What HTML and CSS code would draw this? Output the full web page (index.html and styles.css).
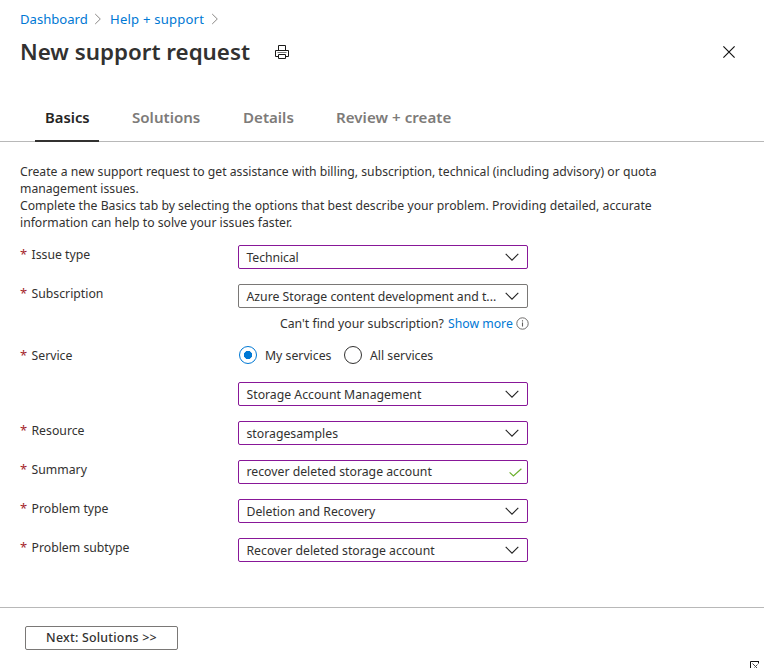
FILE: index.html
```html
<!DOCTYPE html>
<html lang="en">
<head>
<meta charset="utf-8">
<title>New support request</title>
<link rel="stylesheet" href="styles.css">
</head>
<body>
<svg class="sprites" aria-hidden="true">
  <symbol id="chevron-right" viewBox="0 0 8 12"><path d="M1.2 1 6.3 6 1.2 11" fill="none" stroke="#8a8886"/></symbol>
  <symbol id="chevron-down" viewBox="0 0 14 8"><path d="M.7.9 7 7.2 13.3.9" fill="none" stroke="#222" stroke-width="1.1"/></symbol>
</svg>
<div class="blade">
  <nav class="breadcrumb">
    <a class="crumb-dashboard">Dashboard</a>
    <svg class="crumb-arrow"><use href="#chevron-right"/></svg>
    <a class="crumb-help">Help + support</a>
    <svg class="crumb-arrow"><use href="#chevron-right"/></svg>
  </nav>
  <header class="titlebar">
    <h1>New support request</h1>
    <svg class="print" viewBox="0 0 14 14" fill="none" stroke="#1b1a19">
      <path d="M3.5 5.5v-5h7v5M3.5 11.5h-3v-6h13v6h-3" />
      <path d="M3.5 9.5h7v4h-7z"/><path d="M2.5 7.5h9" stroke="#777"/>
    </svg>
    <svg class="close" viewBox="0 0 12 12"><path d="M.4.4 11.6 11.6M11.6.4.4 11.6" stroke="#111" stroke-width="1.15"/></svg>
  </header>
  <div class="tabs">
    <div class="tab tab-basics active">Basics</div>
    <div class="tab tab-solutions">Solutions</div>
    <div class="tab tab-details">Details</div>
    <div class="tab tab-review">Review + create</div>
  </div>
  <main class="content">
    <p class="intro">Create a new support request to get assistance with billing, subscription, technical (including advisory) or quota<br>management issues.<br><span class="intro-wide">Complete the Basics tab by selecting the options that best describe your problem. Providing detailed, accurate</span><br>information can help to solve your issues faster.</p>
    <div class="form">
      <div class="row">
        <div class="label"><span class="star">*</span>Issue type</div>
        <div class="field"><span class="value technical">Technical</span><svg class="arrow"><use href="#chevron-down"/></svg></div>
      </div>
      <div class="row">
        <div class="label"><span class="star">*</span>Subscription</div>
        <div class="stack">
          <div class="field plain"><span class="value">Azure Storage content development and t...</span><svg class="arrow"><use href="#chevron-down"/></svg></div>
          <div class="hint"><span>Can't find your subscription?</span><a>Show more</a>
            <svg class="info" viewBox="0 0 13 13"><circle cx="6.5" cy="6.5" r="5.7" fill="none" stroke="#605e5c" stroke-width=".9"/><path d="M6.5 5.6v4M6.5 3.2v1.3" stroke="#605e5c" stroke-width="1.1"/></svg>
          </div>
        </div>
      </div>
      <div class="row service">
        <div class="label"><span class="star">*</span>Service</div>
        <div class="stack">
          <div class="radios">
            <span class="radio on"></span><span class="radio-text mine">My services</span>
            <span class="radio"></span><span class="radio-text">All services</span>
          </div>
          <div class="field"><span class="value">Storage Account Management</span><svg class="arrow"><use href="#chevron-down"/></svg></div>
        </div>
      </div>
      <div class="row">
        <div class="label"><span class="star">*</span>Resource</div>
        <div class="field"><span class="value">storagesamples</span><svg class="arrow"><use href="#chevron-down"/></svg></div>
      </div>
      <div class="row">
        <div class="label"><span class="star">*</span>Summary</div>
        <div class="field input"><span class="value">recover deleted storage account</span><svg class="check" viewBox="0 0 13 9"><path d="M.6 4.4 4.4 8 12.4.8" fill="none" stroke="#6bb02c" stroke-width="1.2"/></svg></div>
      </div>
      <div class="row">
        <div class="label"><span class="star">*</span>Problem type</div>
        <div class="field"><span class="value">Deletion and Recovery</span><svg class="arrow"><use href="#chevron-down"/></svg></div>
      </div>
      <div class="row">
        <div class="label"><span class="star">*</span>Problem subtype</div>
        <div class="field"><span class="value">Recover deleted storage account</span><svg class="arrow"><use href="#chevron-down"/></svg></div>
      </div>
    </div>
  </main>
  <footer class="footer">
    <button class="next">Next: Solutions &gt;&gt;</button>
    <svg class="grip" viewBox="0 0 9 8" fill="none"><path d="M8 .5H.5V7" stroke="#111"/><path d="M8.5 0v2.5M0 7.5h2.5" stroke="#111"/><path d="M2.5 2.5 7 7M7.5 3.5 4.5 6.5" stroke="#444"/></svg>
  </footer>
</div>
</body>
</html>
```
FILE: styles.css
```css
* { box-sizing: border-box; }
body {
  margin: 0;
  background: #fff;
  color: #323130;
  font: 12.25px/17px "Noto Sans", "Open Sans", sans-serif;
}
svg { display: block; flex: none; }
a { color: #0078d4; }
.sprites { position: absolute; width: 0; height: 0; }
.blade { display: flex; flex-direction: column; height: 668px; overflow: hidden; }

.breadcrumb {
  display: flex;
  align-items: center;
  height: 20px;
  margin-top: 9px;
  padding-left: 20px;
  font-size: 13.1px;
  white-space: nowrap;
}
.crumb-dashboard { width: 67px; }
.crumb-help { width: 94px; margin-left: 1px; letter-spacing: .2px; }
.crumb-arrow { width: 8px; height: 12px; margin: 0 7px; }

.titlebar { display: flex; align-items: center; height: 34px; margin-top: 6px; padding: 0 29px 0 20px; }
h1 { width: 255px; margin: 0; font-size: 22.35px; line-height: 34px; font-weight: 600; white-space: nowrap; }
.print { width: 14px; height: 14px; }
.close { width: 12px; height: 12px; margin-left: auto; }

.tabs {
  display: flex;
  gap: 23px;
  height: 43px;
  margin-top: 30px;
  padding-left: 35px;
  border-bottom: 1px solid #b8b8b8;
  color: #7d7b79;
  font-size: 15.1px;
  font-weight: 600;
  line-height: 36px;
  white-space: nowrap;
}
.tab { height: 43px; padding: 0 10px; }
.tab-basics { width: 64px; font-size: 14.8px; }
.tab-solutions { width: 88px; }
.tab-details { width: 70px; }
.tab-review { letter-spacing: .04px; }
.active { color: #252423; border-bottom: 2px solid #323130; }

.intro { margin: 21px 0 0 20px; font-size: 12.2px; white-space: nowrap; }
.intro-wide { letter-spacing: .02px; }
.form { display: flex; flex-direction: column; gap: 15px; margin: 14px 0 0 20px; }
.row { display: flex; align-items: flex-start; }
.label { display: flex; width: 218px; padding-top: 1px; }
.star { width: 11.5px; color: #a4262c; font-size: 13px; }
.stack { width: 290px; }
.field {
  display: flex;
  align-items: center;
  justify-content: space-between;
  width: 290px;
  height: 24px;
  padding: 0 8px 0 7.5px;
  border: 1px solid #881798;
  border-radius: 2px;
  white-space: nowrap;
}
.plain { border-color: #7a7876; }
.arrow { width: 14px; height: 8px; }
.input { padding-right: 5px; }
.input .value { margin-top: -1px; }
.technical { letter-spacing: -.1px; }
.check { width: 13px; height: 9px; }
.hint { display: flex; align-items: center; height: 17px; margin: 7px -1px 0 42px; white-space: nowrap; }
.hint a { margin-left: 4px; }
.info { width: 13px; height: 13px; margin-left: auto; }

.service { margin-top: -1px; }
.radios { display: flex; align-items: center; height: 18px; margin-bottom: 18px; padding-left: 1px; }
.radio { width: 18px; height: 18px; border: 1px solid #323130; border-radius: 50%; }
.on { border-color: #0078d4; background: radial-gradient(circle, #0078d4 3.8px, transparent 4.4px); }
.radio-text { margin-left: 8px; white-space: nowrap; }
.mine { width: 79px; }

.footer {
  display: flex;
  align-items: flex-start;
  height: 61px;
  margin-top: auto;
  padding: 18px 5px 0 25px;
  border-top: 1px solid #b8b8b8;
}
.next {
  width: 153px;
  height: 24px;
  padding: 0;
  border: 1px solid #7a7876;
  border-radius: 2px;
  background: #fff;
  color: #323130;
  font: 500 12.4px/20px "Noto Sans", "Open Sans", sans-serif;
  letter-spacing: .22px;
}
.grip { width: 9px; height: 8px; margin: 35px 0 0 auto; }
```
